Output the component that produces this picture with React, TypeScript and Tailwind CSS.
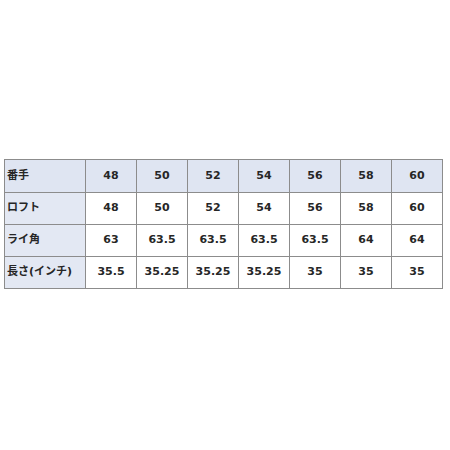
const header = ['48', '50', '52', '54', '56', '58', '60'];
const rows: { label: string; values: string[] }[] = [
  { label: 'ロフト', values: ['48', '50', '52', '54', '56', '58', '60'] },
  { label: 'ライ角', values: ['63', '63.5', '63.5', '63.5', '63.5', '64', '64'] },
  { label: '長さ(インチ)', values: ['35.5', '35.25', '35.25', '35.25', '35', '35', '35'] },
];

export default function App() {
  return (
    <div
      className="w-[450px] h-[450px] bg-white pt-[159px] pl-[4px]"
      style={{ fontFamily: '"DejaVu Sans", "Noto Sans CJK JP", sans-serif' }}
    >
      <table className="border-collapse text-[11px] font-bold text-[#262626]">
        <tbody>
          <tr className="h-[33px] bg-[#dfe5f2]">
            <td className="w-[81px] border border-[#8c8c8c] pl-[2px] text-left">番手</td>
            {header.map((v, i) => (
              <td key={i} className="w-[51px] border border-[#8c8c8c] text-center">{v}</td>
            ))}
          </tr>
          {rows.map((r) => (
            <tr key={r.label} className="h-[32px]">
              <td className="w-[81px] border border-[#8c8c8c] bg-[#e3e8f3] pl-[2px] text-left whitespace-nowrap">{r.label}</td>
              {r.values.map((v, i) => (
                <td key={i} className="w-[51px] border border-[#8c8c8c] text-center">{v}</td>
              ))}
            </tr>
          ))}
        </tbody>
      </table>
    </div>
  );
}
